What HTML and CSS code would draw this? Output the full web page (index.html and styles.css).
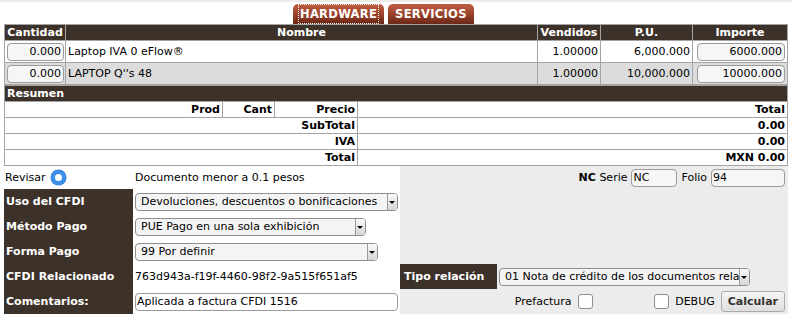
FILE: index.html
```html
<!DOCTYPE html>
<html lang="es">
<head>
    <meta charset="UTF-8">
    <title>Nota de crédito</title>
    <link rel="stylesheet" href="styles.css">
</head>
<body>
    <div class="page">
        <div class="tabs">
            <span class="tab active"><span class="focus">HARDWARE</span></span>
            <span class="tab">SERVICIOS</span>
        </div>

        <table class="items">
            <colgroup>
                <col style="width:61px"><col><col style="width:63px"><col style="width:92px"><col style="width:95px">
            </colgroup>
            <thead>
                <tr>
                    <th>Cantidad</th>
                    <th>Nombre</th>
                    <th>Vendidos</th>
                    <th>P.U.</th>
                    <th>Importe</th>
                </tr>
            </thead>
            <tbody>
                <tr>
                    <td><input class="num qty" value="0.000"></td>
                    <td>Laptop IVA 0 eFlow®</td>
                    <td class="r">1.00000</td>
                    <td class="r">6,000.000</td>
                    <td class="r"><input class="num amt" value="6000.000"></td>
                </tr>
                <tr class="alt">
                    <td><input class="num qty" value="0.000"></td>
                    <td>LAPTOP Q''s 48</td>
                    <td class="r">1.00000</td>
                    <td class="r">10,000.000</td>
                    <td class="r"><input class="num amt" value="10000.000"></td>
                </tr>
            </tbody>
        </table>

        <table class="summary">
            <colgroup>
                <col style="width:218px"><col style="width:52px"><col style="width:83px"><col>
            </colgroup>
            <tr><th colspan="4" class="title">Resumen</th></tr>
            <tr>
                <td>Prod</td>
                <td>Cant</td>
                <td>Precio</td>
                <td>Total</td>
            </tr>
            <tr><td colspan="3">SubTotal</td><td>0.00</td></tr>
            <tr><td colspan="3">IVA</td><td>0.00</td></tr>
            <tr><td colspan="3">Total</td><td>MXN 0.00</td></tr>
        </table>

        <div class="form">
            <div class="cell plain">Revisar <span class="radio"></span></div>
            <div class="cell">Documento menor a 0.1 pesos</div>
            <div class="cell side right"><b>NC</b>&nbsp;Serie <input class="txt serie" value="NC"> Folio <input class="txt folio" value="94"></div>

            <div class="label">Uso del CFDI</div>
            <div class="cell"><span class="sel w264">Devoluciones, descuentos o bonificaciones</span></div>
            <div class="cell side"></div>

            <div class="label">Método Pago</div>
            <div class="cell"><span class="sel w231">PUE Pago en una sola exhibición</span></div>
            <div class="cell side"></div>

            <div class="label">Forma Pago</div>
            <div class="cell"><span class="sel w243">99 Por definir</span></div>
            <div class="cell side"></div>

            <div class="label">CFDI Relacionado</div>
            <div class="cell">763d943a-f19f-4460-98f2-9a515f651af5</div>
            <div class="cell side tight"><span class="label inline">Tipo relación</span><span class="sel w250">01 Nota de crédito de los documentos relacionados</span></div>

            <div class="label">Comentarios:</div>
            <div class="cell"><input class="txt comment" value="Aplicada a factura CFDI 1516"></div>
            <div class="cell side split">
                <span class="half">Prefactura <span class="check"></span></span>
                <span class="half"><span class="check"></span> DEBUG <button class="calc">Calcular</button></span>
            </div>
        </div>
    </div>
</body>
</html>
```

FILE: styles.css
```css
body {
    margin: 0;
    padding: 0;
    font-family: "DejaVu Sans", Verdana, sans-serif;
    font-size: 11px;
    color: #000;
    background-color: #fff;
    border-top: 2px solid #ececec;
}
.page {
    padding: 2px 4px 0 4px;
}
.tabs {
    display: flex;
    gap: 4px;
    padding-left: 289px;
    height: 20px;
}
.tab {
    display: flex;
    align-items: center;
    padding: 0 7px;
    color: #fff;
    font-weight: bold;
    font-size: 11.5px;
    letter-spacing: 0.3px;
    border-radius: 5px 5px 0 0;
    background: linear-gradient(#c25e42, #923d27 60%, #6a2818);
}
.tab.active {
    padding: 0 5px;
}
.focus {
    border: 1px dotted #fff;
    padding: 2px 1px;
}
table {
    width: 100%;
    border-collapse: collapse;
    table-layout: fixed;
}
.items th, .summary .title {
    background-color: #3d3229;
    color: #fff;
    font-weight: bold;
    height: 15px;
    padding: 0 2px;
    border: 1px solid #a4a4a4;
}
.items td {
    border: 1px solid #a4a4a4;
    height: 21px;
    padding: 0 2px;
    white-space: nowrap;
}
.items tr.alt td {
    background-color: #dcdcdc;
}
.items td.r {
    text-align: right;
}
input.num {
    font-family: "DejaVu Sans", Verdana, sans-serif;
    font-size: 11px;
    text-align: right;
    border: 1px solid #9a9a9a;
    border-radius: 4px;
    background-color: #f6f6f6;
    padding: 1px 2px;
    height: 18px;
    box-sizing: border-box;
}
input.qty {
    width: 57px;
}
input.amt {
    width: 88px;
}
.summary .title {
    text-align: left;
}
.summary td {
    border: 1px solid #a4a4a4;
    height: 15px;
    padding: 0 2px;
    text-align: right;
    font-weight: bold;
    background-color: #fff;
}
.form {
    display: grid;
    grid-template-columns: 129px 267px 1fr;
    grid-template-rows: 23px;
    grid-auto-rows: 25px;
}
.cell, .label {
    display: flex;
    align-items: center;
    padding: 0 2px;
    white-space: nowrap;
}
.cell.plain {
    padding-left: 1px;
}
.label {
    background-color: #3d3229;
    color: #fff;
    font-weight: bold;
}
.label.inline {
    align-self: stretch;
    padding: 0 4px;
    width: 89px;
    margin-right: 2px;
}
.side {
    background-color: #ececec;
}
.side.right {
    justify-content: flex-end;
    padding-right: 3px;
}
.side.tight {
    padding: 0;
}
.side.split {
    padding: 0 3px 0 0;
}
.half {
    flex: 1;
    display: flex;
    align-items: center;
    justify-content: flex-end;
    gap: 6px;
}
.radio {
    display: inline-block;
    width: 7px;
    height: 7px;
    border-radius: 50%;
    background-color: #fff;
    border: 4px solid #3d8fe8;
    margin-left: 6px;
    box-shadow: 0 0 0 0.5px #2d78cc;
}
.sel {
    position: relative;
    display: inline-block;
    box-sizing: border-box;
    height: 18px;
    line-height: 16px;
    padding: 0 14px 0 5px;
    border: 1px solid #8e8e8e;
    border-radius: 4px;
    background-color: #f4f4f4;
    overflow: hidden;
    white-space: nowrap;
}
.sel::after {
    content: "";
    position: absolute;
    right: 0;
    top: 0;
    bottom: 0;
    width: 9px;
    border-left: 1px solid #9a9a9a;
    background: #e8e8e8 linear-gradient(#fafafa, #d6d6d6);
}
.sel::before {
    content: "";
    position: absolute;
    right: 2px;
    top: 7px;
    z-index: 1;
    border-left: 3px solid transparent;
    border-right: 3px solid transparent;
    border-top: 3px solid #000;
}
.w264 { width: 264px; }
.w231 { width: 231px; }
.w243 { width: 243px; }
.w250 { width: 251px; }
input.txt {
    font-family: "DejaVu Sans", Verdana, sans-serif;
    font-size: 11px;
    border: 1px solid #9a9a9a;
    border-radius: 4px;
    background-color: #f6f6f6;
    height: 18px;
    box-sizing: border-box;
    padding: 0 1px;
}
input.serie {
    width: 46px;
    margin: 0 4px;
}
input.folio {
    width: 74px;
    margin-left: 4px;
}
input.comment {
    width: 264px;
    background-color: #fff;
}
.check {
    display: inline-block;
    width: 15px;
    height: 15px;
    box-sizing: border-box;
    border: 1px solid #8e8e8e;
    border-radius: 3px;
    background-color: #fff;
}
.calc {
    font-family: "DejaVu Sans", Verdana, sans-serif;
    font-size: 11px;
    font-weight: bold;
    color: #333;
    height: 21px;
    padding: 0 6px;
    border: 1px solid #aaa;
    border-radius: 3px;
    background: linear-gradient(#f6f6f6, #dedede);
}
```
